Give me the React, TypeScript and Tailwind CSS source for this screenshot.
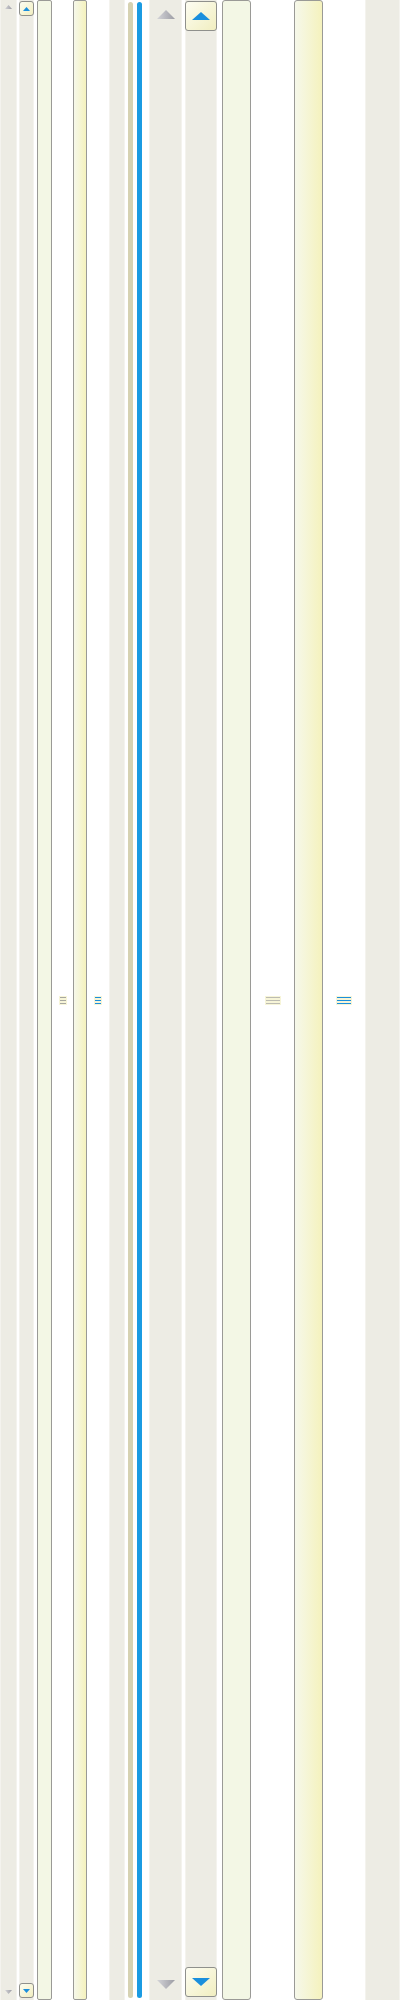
import React from 'react';

const Tri = ({ w, h, down, fill }: { w: number; h: number; down?: boolean; fill: string }) => (
  <svg width={w} height={h} viewBox={`0 0 ${w} ${h}`}>
    {down ? (
      <polygon points={`0,0 ${w},0 ${w / 2},${h}`} fill={fill} />
    ) : (
      <polygon points={`0,${h} ${w},${h} ${w / 2},0`} fill={fill} />
    )}
  </svg>
);

const GrayGrad = () => (
  <defs>
    <linearGradient id="gg" x1="0" x2="1" y1="0" y2="0">
      <stop offset="0" stopColor="#d4d4d8" />
      <stop offset="1" stopColor="#9c9ca4" />
    </linearGradient>
  </defs>
);

function GrayTri({ w, h, down }: { w: number; h: number; down?: boolean }) {
  return (
    <svg width={w} height={h} viewBox={`0 0 ${w} ${h}`}>
      <GrayGrad />
      {down ? (
        <polygon points={`0,0 ${w},0 ${w / 2},${h}`} fill="url(#gg)" />
      ) : (
        <polygon points={`0,${h} ${w},${h} ${w / 2},0`} fill="url(#gg)" />
      )}
    </svg>
  );
}

function Grip({ big, blue }: { big?: boolean; blue?: boolean }) {
  const line = blue ? 'bg-[#1b8fdc]' : big ? 'bg-[#bdbcb2]' : 'bg-[#a8a8a0]';
  return (
    <div
      className={`${big ? 'w-[16px] gap-[2px] py-[1px]' : 'w-[8px] gap-[2px] py-[1px]'} flex flex-col items-stretch justify-center bg-[#f7f5d8] px-[1px]`}
    >
      {[0, 1, 2].map((i) => (
        <div key={i} className={`h-[1px] ${line}`} />
      ))}
    </div>
  );
}

function Track({ w, big, buttons }: { w: string; big?: boolean; buttons?: boolean }) {
  return (
    <div className={`${w} h-[2000px] bg-[#edece4] border-x border-[#f4f3ee] flex flex-col items-center justify-between`}>
      {buttons ? (
        <div
          className={`${big ? 'w-[32px] h-[30px] mt-[1px]' : 'w-[15px] h-[15px] mt-[1px]'} rounded-[3px] border border-[#8f908c] bg-gradient-to-br from-[#fdfdf2] to-[#f1eec0] flex items-center justify-center`}
        >
          <Tri w={big ? 18 : 7} h={big ? 8 : 4} fill="#1a8fdd" />
        </div>
      ) : (
        <div className={`${big ? 'mt-[10px]' : 'mt-[5px]'} flex`}>
          <GrayTri w={big ? 18 : 7} h={big ? 9 : 4} />
        </div>
      )}
      {buttons ? (
        <div
          className={`${big ? 'w-[32px] h-[30px] mb-[3px]' : 'w-[15px] h-[15px] mb-[2px]'} rounded-[3px] border border-[#8f908c] bg-gradient-to-br from-[#fdfdf2] to-[#f1eec0] flex items-center justify-center`}
        >
          <Tri w={big ? 18 : 7} h={big ? 8 : 4} down fill="#1a8fdd" />
        </div>
      ) : (
        <div className={`${big ? 'mb-[11px]' : 'mb-[6px]'} flex`}>
          <GrayTri w={big ? 18 : 7} h={big ? 9 : 4} down />
        </div>
      )}
    </div>
  );
}

export default function App() {
  return (
    <div className="flex w-[400px] h-[2000px] bg-white">
      <Track w="w-[17px]" />
      <div className="w-[2px]" />
      <Track w="w-[15px]" buttons />
      <div className="w-[3px]" />
      <div className="w-[15px] h-[2000px] rounded-[2px] border border-[#9a9a96] bg-[#f3f7e5]" />
      <div className="w-[21px] flex items-center justify-center">
        <Grip />
      </div>
      <div className="w-[14px] h-[2000px] rounded-[2px] border border-[#9a9a96] bg-gradient-to-r from-[#f6f8ea] to-[#f5f2bd]" />
      <div className="w-[22px] flex items-center justify-center">
        <Grip blue />
      </div>
      <div className="w-[16px] h-[2000px] bg-[#edece4] border-x border-[#f4f3ee]" />
      <div className="w-[3px]" />
      <div className="w-[5px] h-[2000px] py-[2px] flex">
        <div className="flex-1 rounded-full bg-[#d6d2b2]" />
      </div>
      <div className="w-[4px]" />
      <div className="w-[5px] h-[2000px] py-[2px] flex">
        <div className="flex-1 rounded-full bg-[#1b9be2]" />
      </div>
      <div className="w-[7px]" />
      <Track w="w-[33px]" big />
      <div className="w-[3px]" />
      <Track w="w-[32px]" big buttons />
      <div className="w-[5px]" />
      <div className="w-[29px] h-[2000px] rounded-[3px] border border-[#9a9a96] bg-[#f3f7e5]" />
      <div className="w-[43px] flex items-center justify-center">
        <Grip big />
      </div>
      <div className="w-[29px] h-[2000px] rounded-[3px] border border-[#9a9a96] bg-gradient-to-r from-[#f6f8ea] to-[#f5f2bd]" />
      <div className="w-[42px] flex items-center justify-center">
        <Grip big blue />
      </div>
      <div className="w-[35px] h-[2000px] bg-[#edece4] border-x border-[#f4f3ee]" />
    </div>
  );
}
